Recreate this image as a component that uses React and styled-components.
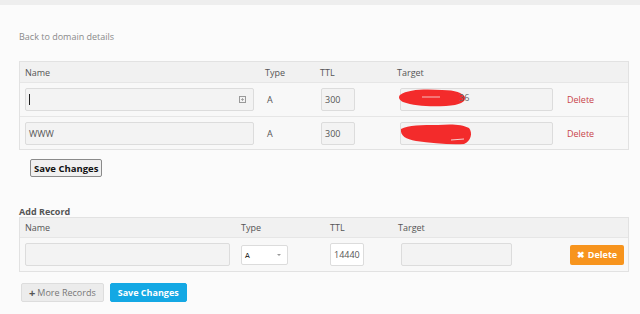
import React from "react";
import styled, { createGlobalStyle } from "styled-components";

const GlobalStyle = createGlobalStyle`
  html, body {
    margin: 0;
    padding: 0;
    background: #fbfbfb;
    font-family: "Open Sans", "Liberation Sans", sans-serif;
    font-size: 9px;
    color: #555;
  }
  * { box-sizing: border-box; }
`;

const TopBar = styled.div`
  height: 5px;
  background: #eeeeee;
`;

const Page = styled.div`
  padding: 26px 12px 0 19px;
`;

const BackLink = styled.a`
  display: block;
  color: #8a8a8a;
  font-size: 9px;
  line-height: 12px;
  text-decoration: none;
  margin-bottom: 18px;
`;

const Table = styled.div`
  border: 1px solid #e2e2e2;
  background: #f8f8f8;
  width: 610px;
`;

const Row = styled.div`
  display: grid;
  grid-template-columns: ${(p) => p.$cols};
  align-items: center;
  height: ${(p) => p.$h}px;
  border-top: ${(p) => (p.$first ? "none" : "1px solid #e6e6e6")};
  background: ${(p) => (p.$head ? "#f1f1f1" : "transparent")};
`;

const Cell = styled.div`
  padding-left: ${(p) => p.$pl ?? 5}px;
  padding-right: ${(p) => p.$pr ?? 0}px;
  display: flex;
  align-items: center;
  justify-content: ${(p) => (p.$end ? "flex-end" : "flex-start")};
  position: relative;
`;

const HeadText = styled.span`
  color: #555;
  font-size: 9px;
`;

const Input = styled.div`
  width: ${(p) => p.$w}px;
  height: 23px;
  background: ${(p) => (p.$white ? "#fff" : "#f3f3f3")};
  border: 1px solid #dcdcdc;
  border-radius: 2px;
  display: flex;
  align-items: center;
  padding-left: 3px;
  color: #555;
  font-size: 9px;
  position: relative;
`;

const Caret = styled.span`
  display: inline-block;
  width: 1px;
  height: 11px;
  background: #222;
`;

const FieldIcon = styled.svg`
  position: absolute;
  right: 7px;
  top: 7px;
`;

const Scribble = styled.svg`
  position: absolute;
  left: -3px;
  top: -4px;
  pointer-events: none;
`;

const TypeText = styled.span`
  color: #555;
  font-size: 9px;
  padding-left: 1px;
`;

const DeleteLink = styled.a`
  color: #c9454a;
  font-size: 9px;
  text-decoration: none;
`;

const OldButton = styled.button`
  font-family: "Open Sans", "Liberation Sans", sans-serif;
  font-weight: 700;
  font-size: 9.5px;
  color: #111;
  background: #f0f0f0;
  border: 1px solid #8a8a8a;
  border-radius: 2px;
  height: 18px;
  padding: 0 3px;
  margin: 9px 0 0 11px;
  display: block;
`;

const SectionTitle = styled.div`
  font-weight: 700;
  font-size: 9px;
  color: #555;
  margin-top: 29px;
  line-height: 11px;
`;

const Select = styled.div`
  width: 47px;
  height: 20px;
  background: #fff;
  border: 1px solid #dcdcdc;
  border-radius: 2px;
  display: flex;
  align-items: center;
  justify-content: space-between;
  padding: 2px 6px 0 3px;
  font-family: "DejaVu Sans", sans-serif;
  font-size: 7px;
  color: #000;
`;

const SelectArrow = styled.span`
  width: 0;
  height: 0;
  border-left: 2px solid transparent;
  border-right: 2px solid transparent;
  border-top: 2px solid #999;
  margin-top: -2px;
`;

const OrangeButton = styled.button`
  font-family: "Open Sans", "Liberation Sans", sans-serif;
  font-weight: 700;
  font-size: 9px;
  color: #fff;
  background: #f7941d;
  border: none;
  border-radius: 2px;
  height: 20px;
  width: 54px;
  display: flex;
  align-items: center;
  justify-content: center;
  gap: 3px;
  padding: 0;
`;

const Actions = styled.div`
  display: flex;
  gap: 6px;
  margin: 11px 0 0 2px;
`;

const ActionButton = styled.button`
  font-family: "Open Sans", "Liberation Sans", sans-serif;
  font-size: 9px;
  font-weight: ${(p) => (p.$primary ? 700 : 400)};
  color: ${(p) => (p.$primary ? "#fff" : "#777")};
  background: ${(p) => (p.$primary ? "#14a8e4" : "#ececec")};
  border: 1px solid ${(p) => (p.$primary ? "#14a8e4" : "#dddddd")};
  border-radius: 2px;
  height: 19px;
  padding: 0 ${(p) => (p.$primary ? 7 : 7)}px;
  display: flex;
  align-items: center;
  gap: 2px;
`;

const Plus = styled.b`
  color: #555;
  font-size: 11px;
  line-height: 9px;
`;

const COLS1 = "240px 55px 77px 170px 1fr";
const COLS2 = "216px 89px 68px 127px 1fr";

const records = [
  { name: "", focus: true, type: "A", ttl: "300", scribble: 1 },
  { name: "WWW", type: "A", ttl: "300", scribble: 2 },
];

const RedScribble = ({ variant }) =>
  variant === 1 ? (
    <Scribble width="80" height="30" viewBox="0 0 80 30">
      <path
        d="M2 10 C10 4 28 4 44 5 C58 5 64 8 67 12 C68 17 62 20 48 21 C32 22 16 21 5 17 C1 15 0 12 2 10 Z"
        fill="#f32b2b"
      />
      <path d="M24 12 L42 12" stroke="#f6c0c0" strokeWidth="1" />
      <text x="61" y="16" fontSize="9" fill="#666" fontFamily="Open Sans">36</text>
    </Scribble>
  ) : (
    <Scribble width="80" height="30" viewBox="0 0 80 30">
      <path
        d="M3 10 C10 6 24 6 40 6 C52 5 64 5 71 9 C75 14 73 22 66 25 C52 26 34 24 18 22 C8 20 2 17 3 10 Z"
        fill="#f32b2b"
      />
      <path d="M53 21 L66 20" stroke="#f6d0d0" strokeWidth="1" />
    </Scribble>
  );

export default function App() {
  return (
    <>
      <GlobalStyle />
      <TopBar />
      <Page>
        <BackLink href="#">Back to domain details</BackLink>

        <Table>
          <Row $cols={COLS1} $h={20} $head $first>
            <Cell><HeadText>Name</HeadText></Cell>
            <Cell><HeadText>Type</HeadText></Cell>
            <Cell><HeadText>TTL</HeadText></Cell>
            <Cell><HeadText>Target</HeadText></Cell>
            <Cell />
          </Row>
          {records.map((r, i) => (
            <Row key={i} $cols={COLS1} $h={i === 0 ? 34 : 33}>
              <Cell>
                <Input $w={229}>
                  {r.focus ? <Caret /> : r.name}
                  {r.focus && (
                    <FieldIcon width="7" height="7" viewBox="0 0 7 7">
                      <rect x="0.5" y="0.5" width="6" height="6" fill="none" stroke="#999" />
                      <path d="M3.5 2 V5 M2 3.5 H5" stroke="#999" strokeWidth="0.8" />
                    </FieldIcon>
                  )}
                </Input>
              </Cell>
              <Cell $pl={6}><TypeText>{r.type}</TypeText></Cell>
              <Cell $pl={6}><Input $w={34}>{r.ttl}</Input></Cell>
              <Cell $pl={8}>
                <Input $w={153}>
                  <RedScribble variant={r.scribble} />
                </Input>
              </Cell>
              <Cell>
                <DeleteLink href="#">Delete</DeleteLink>
              </Cell>
            </Row>
          ))}
        </Table>

        <OldButton>Save Changes</OldButton>

        <SectionTitle>Add Record</SectionTitle>
        <Table>
          <Row $cols={COLS2} $h={19} $head $first>
            <Cell><HeadText>Name</HeadText></Cell>
            <Cell><HeadText>Type</HeadText></Cell>
            <Cell><HeadText>TTL</HeadText></Cell>
            <Cell><HeadText>Target</HeadText></Cell>
            <Cell />
          </Row>
          <Row $cols={COLS2} $h={34}>
            <Cell><Input $w={205} /></Cell>
            <Cell>
              <Select>
                A
                <SelectArrow />
              </Select>
            </Cell>
            <Cell><Input $w={34} $white>14440</Input></Cell>
            <Cell $pl={8}><Input $w={111} /></Cell>
            <Cell $end $pr={4}>
              <OrangeButton>
                <span>✖</span>Delete
              </OrangeButton>
            </Cell>
          </Row>
        </Table>

        <Actions>
          <ActionButton>
            <Plus>+</Plus>More Records
          </ActionButton>
          <ActionButton $primary>Save Changes</ActionButton>
        </Actions>
      </Page>
    </>
  );
}
